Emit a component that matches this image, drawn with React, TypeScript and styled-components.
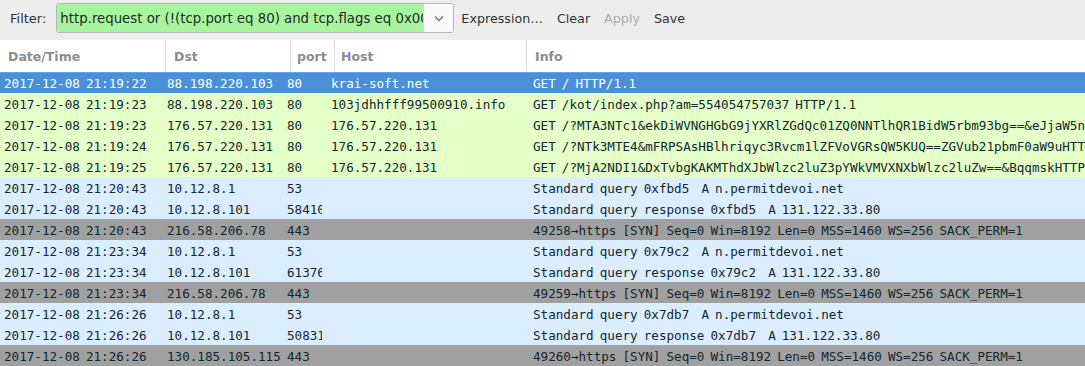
import React from "react";
import styled, { createGlobalStyle } from "styled-components";

const Global = createGlobalStyle`
  html, body { margin: 0; padding: 0; background: #ffffff; }
  body { font-family: "DejaVu Sans", "Liberation Sans", sans-serif; overflow: hidden; }
`;

const Window = styled.div`
  width: 1085px;
  height: 366px;
  overflow: hidden;
  display: flex;
  flex-direction: column;
  background: #ffffff;
`;

const Toolbar = styled.div`
  height: 40px;
  box-sizing: border-box;
  padding: 3px 0 7px 10px;
  display: flex;
  align-items: center;
  background: #ededed;
  font-size: 13px;
  color: #2e3436;
`;

const Label = styled.span`
  margin-right: 10px;
  color: #2e3436;
`;

const FilterBox = styled.div`
  width: 398px;
  height: 30px;
  box-sizing: border-box;
  display: flex;
  border: 1px solid #b6b6b3;
  border-radius: 3px;
  overflow: hidden;
  background: #ffffff;
`;

const FilterText = styled.div`
  flex: 1;
  min-width: 0;
  background: #a8f5a0;
  padding-left: 3px;
  display: flex;
  align-items: center;
  white-space: nowrap;
  overflow: hidden;
  color: #1f2a1f;
  font-size: 13.3px;
`;

const DropButton = styled.div`
  width: 29px;
  display: flex;
  align-items: center;
  justify-content: center;
  background: #fafafa;
  border-left: 1px solid #d6d6d3;
`;

const ToolButton = styled.span<{ $disabled?: boolean }>`
  padding: 0 7px;
  font-size: 12.7px;
  color: ${(p) => (p.$disabled ? "#a9aaa8" : "#2e3436")};
`;

const HeaderRow = styled.div`
  height: 32px;
  display: grid;
  grid-template-columns: 166px 125px 44px 192px 1fr;
  background: #ffffff;
`;

const HeaderCell = styled.div<{ $pad: number; $last?: boolean }>`
  display: flex;
  align-items: center;
  padding-left: ${(p) => p.$pad}px;
  border-right: ${(p) => (p.$last ? "none" : "1px solid #dcdcdc")};
  font-weight: bold;
  font-size: 12.5px;
  color: #8b8e8f;
  white-space: nowrap;
  overflow: hidden;
`;

const kinds = {
  sel: { bg: "#4a90d9", fg: "#ffffff", top: "#68a4e2" },
  http: { bg: "#e4ffc7", fg: "#12272e", top: "#e4ffc7" },
  dns: { bg: "#daeeff", fg: "#12272e", top: "#daeeff" },
  syn: { bg: "#a0a0a0", fg: "#12272e", top: "#a0a0a0" },
};

type Kind = keyof typeof kinds;

const Row = styled.div<{ $kind: Kind }>`
  height: 21px;
  box-sizing: border-box;
  display: grid;
  grid-template-columns: 163px 120px 44px 202px 1fr;
  background: ${(p) => kinds[p.$kind].bg};
  color: ${(p) => kinds[p.$kind].fg};
  border-top: 1px solid ${(p) => kinds[p.$kind].top};
  font-family: "DejaVu Sans Mono", "Liberation Mono", monospace;
  font-size: 12.6px;
  word-spacing: -1.5px;
`;

const Cell = styled.div<{ $mr?: number }>`
  padding-left: 4px;
  margin-right: ${(p) => p.$mr ?? 0}px;
  min-width: 0;
  display: flex;
  align-items: center;
  white-space: pre;
  overflow: hidden;
`;

type Packet = [Kind, string, string, string, string, string];

const packets: Packet[] = [
  ["sel", "2017-12-08 21:19:22", "88.198.220.103", "80", "krai-soft.net", "GET / HTTP/1.1"],
  ["http", "2017-12-08 21:19:23", "88.198.220.103", "80", "103jdhhfff99500910.info", "GET /kot/index.php?am=554054757037 HTTP/1.1"],
  ["http", "2017-12-08 21:19:23", "176.57.220.131", "80", "176.57.220.131", "GET /?MTA3NTc1&ekDiWVNGHGbG9jYXRlZGdQc01ZQ0NNTlhQR1BidW5rbm93bg==&eJjaW5nLmNvbQ==HTTP/1.1"],
  ["http", "2017-12-08 21:19:24", "176.57.220.131", "80", "176.57.220.131", "GET /?NTk3MTE4&mFRPSAsHBlhriqyc3Rvcm1lZFVoVGRsQW5KUQ==ZGVub21pbmF0aW9uHTTP/1.1"],
  ["http", "2017-12-08 21:19:25", "176.57.220.131", "80", "176.57.220.131", "GET /?MjA2NDI1&DxTvbgKAKMThdXJbWlzc2luZ3pYWkVMVXNXbWlzc2luZw==&BqqmskHTTP/1.1"],
  ["dns", "2017-12-08 21:20:43", "10.12.8.1", "53", "", "Standard query 0xfbd5  A n.permitdevoi.net"],
  ["dns", "2017-12-08 21:20:43", "10.12.8.101", "58410", "", "Standard query response 0xfbd5  A 131.122.33.80"],
  ["syn", "2017-12-08 21:20:43", "216.58.206.78", "443", "", "49258\u2192https [SYN] Seq=0 Win=8192 Len=0 MSS=1460 WS=256 SACK_PERM=1"],
  ["dns", "2017-12-08 21:23:34", "10.12.8.1", "53", "", "Standard query 0x79c2  A n.permitdevoi.net"],
  ["dns", "2017-12-08 21:23:34", "10.12.8.101", "61376", "", "Standard query response 0x79c2  A 131.122.33.80"],
  ["syn", "2017-12-08 21:23:34", "216.58.206.78", "443", "", "49259\u2192https [SYN] Seq=0 Win=8192 Len=0 MSS=1460 WS=256 SACK_PERM=1"],
  ["dns", "2017-12-08 21:26:26", "10.12.8.1", "53", "", "Standard query 0x7db7  A n.permitdevoi.net"],
  ["dns", "2017-12-08 21:26:26", "10.12.8.101", "50831", "", "Standard query response 0x7db7  A 131.122.33.80"],
  ["syn", "2017-12-08 21:26:26", "130.185.105.115", "443", "", "49260\u2192https [SYN] Seq=0 Win=8192 Len=0 MSS=1460 WS=256 SACK_PERM=1"],
];

const Chevron = () => (
  <svg width="10" height="7" viewBox="0 0 10 7">
    <path d="M1 1.5 L5 5.5 L9 1.5" fill="none" stroke="#6e6e6e" strokeWidth="1.3" />
  </svg>
);

export default function App() {
  return (
    <Window>
      <Global />
      <Toolbar>
        <Label>Filter:</Label>
        <FilterBox>
          <FilterText>http.request or (!(tcp.port eq 80) and tcp.flags eq 0x002)</FilterText>
          <DropButton>
            <Chevron />
          </DropButton>
        </FilterBox>
        <ToolButton>Expression…</ToolButton>
        <ToolButton>Clear</ToolButton>
        <ToolButton $disabled>Apply</ToolButton>
        <ToolButton>Save</ToolButton>
      </Toolbar>
      <HeaderRow>
        <HeaderCell $pad={8}>Date/Time</HeaderCell>
        <HeaderCell $pad={8}>Dst</HeaderCell>
        <HeaderCell $pad={6}>port</HeaderCell>
        <HeaderCell $pad={6}>Host</HeaderCell>
        <HeaderCell $pad={8} $last>Info</HeaderCell>
      </HeaderRow>
      {packets.map(([kind, time, dst, port, host, info], i) => (
        <Row key={i} $kind={kind}>
          <Cell>{time}</Cell>
          <Cell>{dst}</Cell>
          <Cell $mr={5}>{port}</Cell>
          <Cell>{host}</Cell>
          <Cell>{info}</Cell>
        </Row>
      ))}
    </Window>
  );
}
